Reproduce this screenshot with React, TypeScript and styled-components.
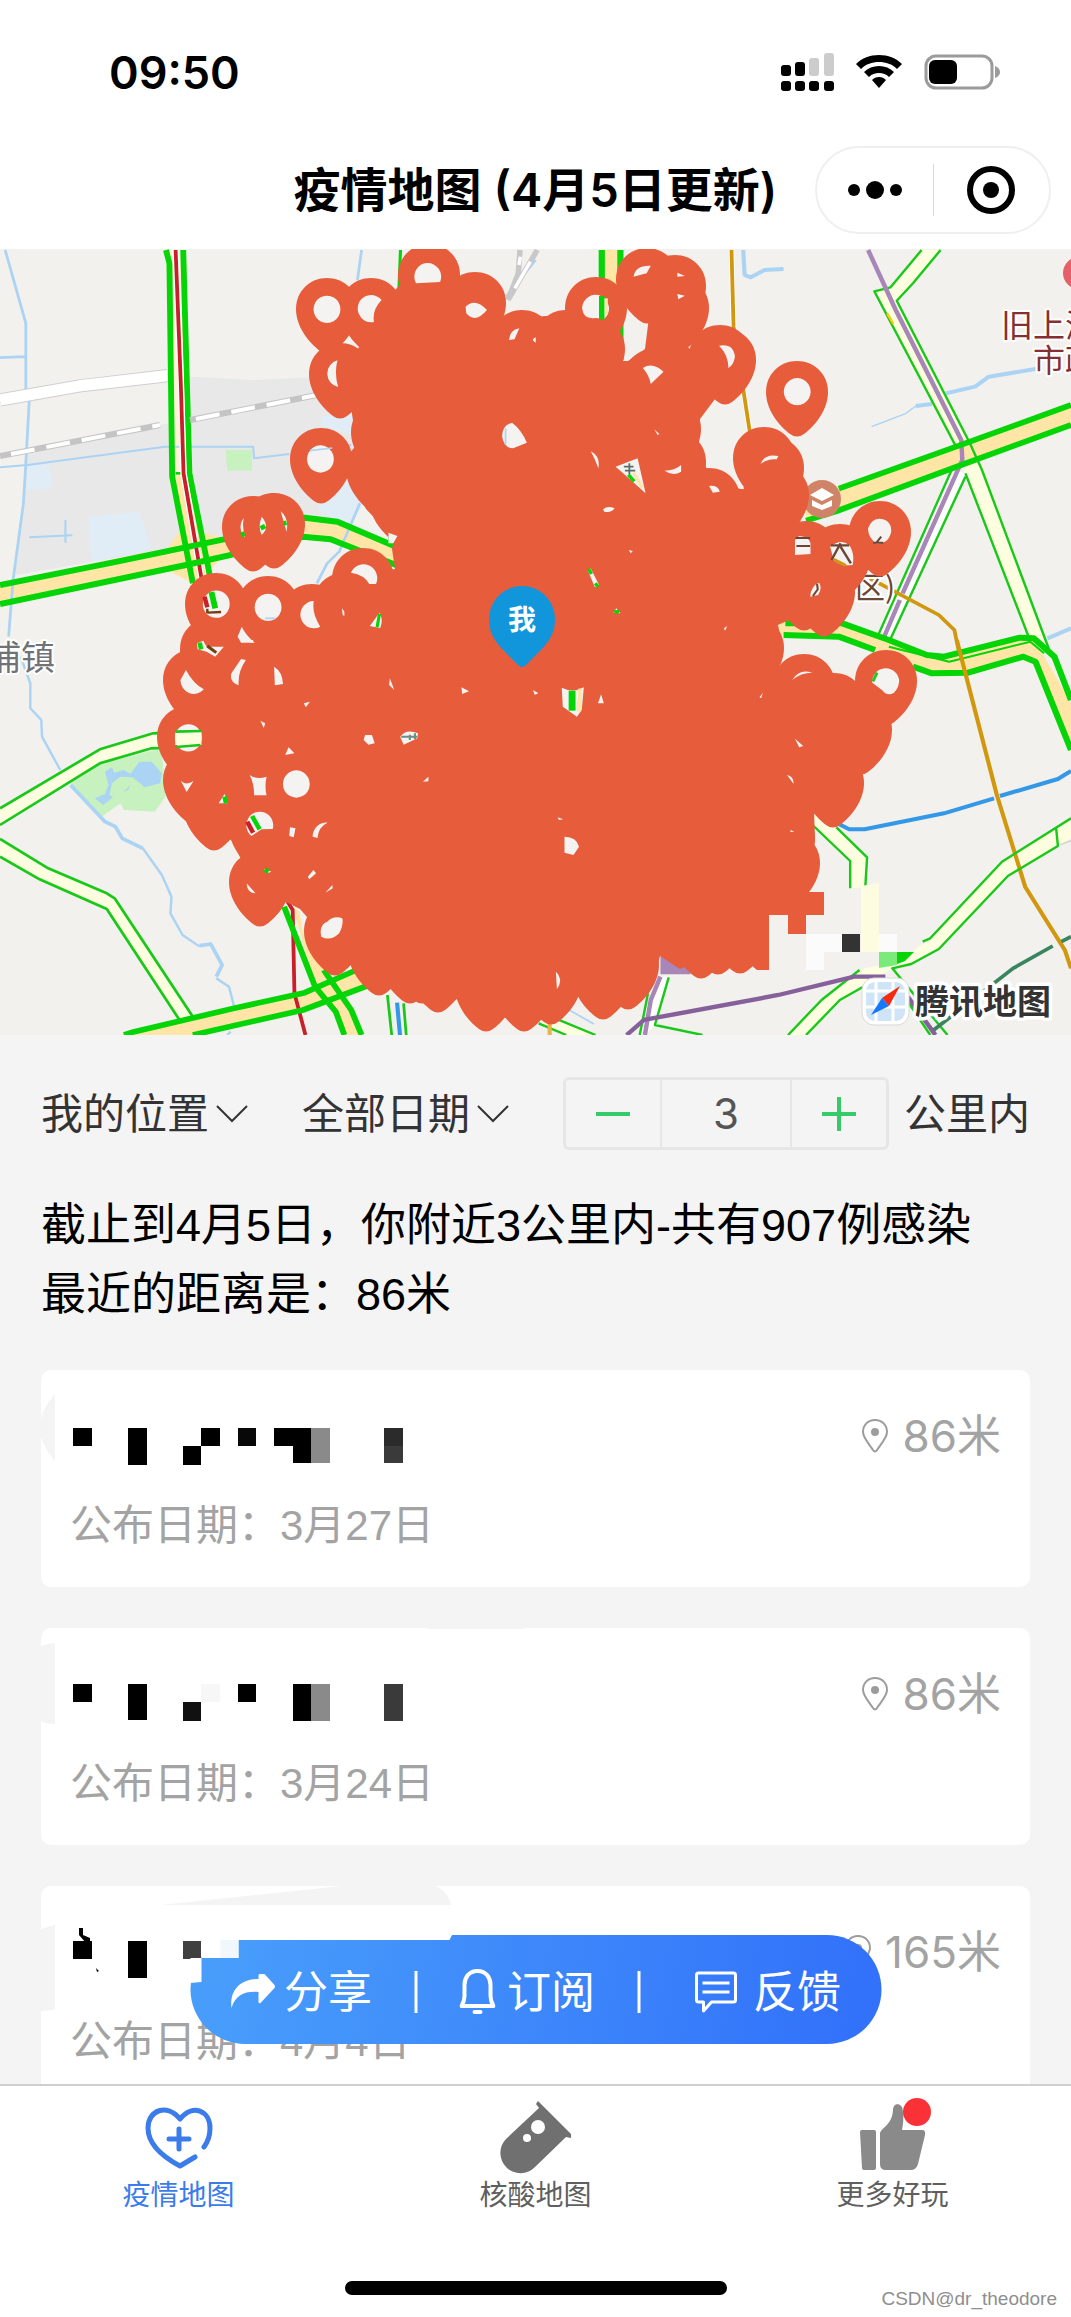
import React, { useState } from "react";
import styled, { createGlobalStyle } from "styled-components";

const sans = `Inter, "Noto Sans CJK SC", sans-serif`;
const copy = `"Liberation Sans", "Noto Sans CJK SC", sans-serif`;

const GlobalStyle = createGlobalStyle`
  * { box-sizing: border-box; }
  body { margin: 0; background: #fff; font-family: ${sans}; color: #000; }
  button, input, select { font: inherit; color: inherit; background: none; border: 0; padding: 0; margin: 0; }
  button { cursor: pointer; }
`;

/* ---------- shell ---------- */

const Shell = styled.div`
  display: flex;
  flex-direction: column;
  height: 100vh;
  overflow: hidden;
  background: #f4f4f4;
`;

const StatusBar = styled.header`
  display: flex;
  align-items: center;
  justify-content: space-between;
  height: 144px;
  padding: 0 71px 0 109px;
  background: #fff;
  font-size: 45px;
  font-weight: 600;
`;

const StatusIcons = styled.div`
  display: flex;
  align-items: center;
  gap: 22px;
`;

const NavBar = styled.div`
  display: grid;
  grid-template-columns: 1fr auto 1fr;
  align-items: center;
  height: 105px;
  padding: 0 20px 13px;
  background: #fff;
`;

const Title = styled.h1`
  grid-column: 2;
  margin: 0;
  font-size: 47px;
  line-height: 60px;
  font-weight: 600;
`;

const Capsule = styled.div`
  justify-self: end;
  display: flex;
  align-items: center;
  width: 236px;
  height: 88px;
  border: 2px solid #efefef;
  border-radius: 44px;
`;

const CapsuleButton = styled.button`
  flex: 1;
  display: flex;
  justify-content: center;
  align-items: center;
  height: 52px;
  & + & {
    border-left: 1px solid #d8d8d8;
  }
`;

const MapView = styled.section`
  flex: none;
  height: 786px;
  background: #f2f1ed;
  svg {
    display: block;
    width: 100%;
    height: 100%;
  }
`;

const Main = styled.main`
  position: relative;
  flex: 1;
  min-height: 0;
  overflow: hidden;
  padding: 42px 41px 0;
`;

/* ---------- filters ---------- */

const Filters = styled.form`
  display: flex;
  align-items: center;
  height: 73px;
  font-size: 42px;
  line-height: 60px;
  color: #333;
`;

const Picker = styled.label`
  display: flex;
  align-items: center;
  gap: 7px;
  margin-right: 54px;
`;

const Select = styled.select`
  appearance: none;
  width: 168px;
  line-height: 60px;
  outline: none;
`;

const Radius = styled.div`
  display: flex;
  align-items: center;
  gap: 15px;
  margin-left: auto;
`;

const Stepper = styled.div`
  display: flex;
  height: 73px;
  border: 3px solid #e6e6e6;
  border-radius: 6px;
`;

const StepButton = styled.button`
  display: flex;
  align-items: center;
  justify-content: center;
  width: 94px;
`;

const StepInput = styled.input`
  width: 132px;
  border: solid #e6e6e6;
  border-width: 0 2px;
  text-align: center;
  color: #555;
  outline: none;
`;

const Summary = styled.p`
  margin: 41px 0;
  font-family: ${copy};
  font-size: 45px;
  line-height: 69px;
`;

/* ---------- case cards ---------- */

const CaseList = styled.ul`
  display: flex;
  flex-direction: column;
  gap: 41px;
  margin: 0;
  padding: 0;
  list-style: none;
`;

const Card = styled.li`
  position: relative;
  display: flex;
  flex-direction: column;
  gap: 30px;
  padding: 36px 29px 31px;
  border-radius: 10px;
  background: #fff;
  color: #a3a3a3;
  line-height: 60px;
`;

const Mosaic = styled.svg`
  position: absolute;
  left: 0;
  top: 0;
  overflow: visible;
`;

const Distance = styled.div`
  display: flex;
  align-items: center;
  justify-content: flex-end;
  gap: 14px;
  font-size: 44px;
`;

const Published = styled.div`
  font-family: ${copy};
  font-size: 42px;
`;

/* ---------- floating actions ---------- */

const Actions = styled.div`
  position: absolute;
  left: 50%;
  bottom: 40px;
  transform: translateX(-50%);
  display: flex;
  align-items: center;
  width: 691px;
  height: 109px;
  padding: 4px 40px 0;
  border-radius: 55px;
  background: linear-gradient(100deg, #489dfb 5%, #3272fa 95%);
  color: #fff;
`;

const ActionPatch = styled.svg`
  position: absolute;
  left: 0;
  top: 0;
  overflow: visible;
`;

const Action = styled.button<{ $gap: number }>`
  display: flex;
  align-items: center;
  gap: ${(p) => p.$gap}px;
  font-size: 44px;
  line-height: 60px;
  &:last-child {
    margin-left: auto;
  }
`;

const Rule = styled.span`
  width: 3px;
  height: 42px;
  margin: 0 42px;
  background: #fff;
`;

/* ---------- tab bar ---------- */

const Footer = styled.footer`
  position: relative;
  flex: none;
  height: 233px;
  border-top: 2px solid #cfcfcf;
  background: #fff;
`;

const Tabs = styled.nav`
  display: grid;
  grid-template-columns: repeat(3, 1fr);
  padding-top: 15px;
`;

const Tab = styled.a<{ $active?: boolean }>`
  display: flex;
  flex-direction: column;
  align-items: center;
  gap: 4px;
  font-size: 28px;
  line-height: 40px;
  text-decoration: none;
  color: ${(p) => (p.$active ? "#3b7bea" : "#5f5f5f")};
  svg {
    overflow: visible;
  }
`;

const HomeIndicator = styled.div`
  position: absolute;
  left: 50%;
  bottom: 22px;
  width: 382px;
  height: 14px;
  margin-left: -191px;
  border-radius: 7px;
  background: #000;
`;

const Watermark = styled.span`
  position: absolute;
  right: 14px;
  bottom: 6px;
  font-family: ${copy};
  font-size: 19px;
  line-height: 24px;
  color: #8e8e8e;
`;

/* ---------- map drawing ---------- */

const GREEN = "#05d506";
const THIN = "#19c819";
const CREAM = "#ffe6a6";
const PALE = "#fdfde0";
const WATER = "#abd3f3";
const PIN = "#e75c3b";
const LAND = "#f2f1ed";

type Line = [d: string, color: string, width: number];
type Area = [d: string, color: string];
type Tile = { at: string; areas: Area[]; lines: Line[] };

const WEST = "0.34437 0.33333";
const EAST = "0.34503 0.33333";

const tiles: Tile[] = [
  {
    at: `translate(0 1) scale(${WEST})`,
    areas: [
      ["M80 600 490 520 500 385 555 380 740 390 1050 375V760L985 820 880 800 700 860 45 975 75 660Z", "#e8e8e8"],
      ["M80 640 145 645 152 715 75 720ZM258 800 405 785 438 890 430 900 265 935ZM930 500 1060 480 1060 560 935 530ZM930 740 1010 690 1050 770 1010 830 925 780Z", "#e0edf7"],
      ["M655 600H732V662H660Z", "#c8f1c0"],
      ["M490 890 530 830 640 862 630 940 560 1000 495 965Z", CREAM],
      ["M482 0 500 680 560 1000 575 1090H630L550 670 530 0Z", "#fff3d6"],
      ["M500 680 560 1000 600 1000 550 675Z", CREAM],
      ["M0 1005 340 925 650 865 885 800 980 815 1145 888 1150 950 960 868 880 860 670 915 0 1062Z", CREAM],
    ],
    lines: [
      ["M15 0 75 220V420M85 450 75 640 68 760 38 990 25 1160M0 323 72 320M1050 0 1038 90M1555 30 1470 140M1045 760 985 905 950 940 920 1000", WATER, 8],
      ["M0 652 80 645 320 612 480 590H735L738 625 840 612M880 603 1020 585M85 862 210 856M190 810V878", WATER, 6],
      ["M0 450 230 408 487 377", "#cfcfcf", 40],
      ["M0 450 230 408 487 377", "#ffffff", 34],
      ["M1510 0 1505 70 1475 150M1560 0 1475 150", "#c8c8c8", 16],
      ["M1511 20 1507 45M1540 35 1495 115", "#ffffff", 10],
      ["M482 0 492 40 500 680 560 1000", GREEN, 17],
      ["M532 0 550 670 610 980 625 1075", GREEN, 17],
      ["M510 670H550", GREEN, 8],
      ["M510 0 525 400 533 670 600 1075", "#ffffff", 19],
      ["M510 0 525 400 533 670 600 1075", "#c8202a", 11],
      ["M0 1005 340 935 650 868 885 803 980 815 1145 888M0 1062 540 945 700 908 880 860 960 868 1150 945", GREEN, 18],
      ["M1163 0 1158 130M1132 845V890", GREEN, 9],
    ],
  },
  {
    at: `translate(530 1) scale(${EAST})`,
    areas: [
      ["M208 0H262V330H208Z", CREAM],
      ["M1135 0 1045 112 998 124 1235 590 1260 670 1445 1160 1500 1190 1310 640 1063 152 1110 100 1190 0Z", PALE],
      ["M1222 660 1000 1165 1045 1165 1262 670Z", "#ffffff"],
      ["M895 716 1235 590 1568 465V525L1250 645 890 783 800 810V750Z", CREAM],
    ],
    lines: [
      ["M208 0V330M262 0V330", GREEN, 18],
      ["M584 0 590 230 637 545", "#ffffff", 16],
      ["M584 0 590 230 637 545", "#d1970f", 11],
      ["M618 0 622 75 640 82 680 60 735 57M1118 468 1165 462M1205 430 1290 410 1330 380 1465 357M1500 1165 1568 1135", WATER, 12],
      ["M990 530 1090 490 1118 468", WATER, 4],
      ["M1135 0 1045 112 998 124 1235 590M1190 0 1110 100 1063 152 1275 580M1262 670 1445 1160M1275 580 1310 660 1505 1200M1222 660 990 1200M1262 680 1030 1200", THIN, 7],
      ["M1035 190 1053 222", "#ffc60a", 7],
      ["M980 0 1060 180 1250 570 1253 630 1080 1030M1072 1050 1010 1200", "#a887b8", 13],
      ["M895 716 1235 590 1568 465M800 812 890 783 1250 645 1568 525", GREEN, 17],
      ["M985 985 1185 1095 1230 1140 1242 1200", "#d1970f", 11],
    ],
  },
  {
    at: `translate(0 391) scale(${WEST})`,
    areas: [
      ["M205 430 290 372 470 325 480 470 450 515 360 510 350 490 295 530Z", "#c8f1c0"],
      ["M0 505 290 328 445 280 590 272V318L440 325 290 370 0 555ZM0 597 140 685 310 760 333 775 560 1130 520 1138 310 807 115 718 0 650Z", PALE],
      ["M305 395 325 382 332 398 360 390 378 402 405 365 440 365 470 400 465 430 420 442 385 412 350 410 325 430 318 465 328 472 300 495 275 475 305 462 315 435ZM358 455 380 435 372 450Z", WATER],
      ["M360 1185 885 1058 1035 990 1065 1038 880 1110 560 1185Z", CREAM],
      ["M850 800 870 815 880 880 1020 1110 1050 1185H1000L975 1115 915 1040Z", CREAM],
    ],
    lines: [
      ["M60 50 88 130V205L120 240 122 290 175 390M415 625 470 705 498 770 495 820 530 885 580 920M628 1015 665 1040 680 1100M670 1175 660 1185", WATER, 7],
      ["M205 435 305 545 335 560 355 595 415 625M580 917 612 912 645 975 628 1010", WATER, 11],
      ["M0 505 290 328 445 280 590 272M0 555 290 370 440 325 590 318M0 597 140 685 310 760 333 775 560 1130M0 650 115 718 310 807 520 1138", THIN, 8],
      ["M835 785 850 810 855 1060 887 1185", "#c8202a", 11],
      ["M360 1185 390 1175 680 1105 885 1058 1035 990M560 1185 880 1110 1065 1038M825 800 915 1040 975 1115 1000 1185M940 990 1020 1110 1050 1185", GREEN, 17],
      ["M1125 1065 1138 1190M1172 1090 1180 1190", THIN, 8],
      ["M1153 1088 1162 1190", "#3498e8", 12],
    ],
  },
  {
    at: `translate(530 391) scale(${EAST})`,
    areas: [
      ["M735-60 905-50 1040 0 1150 45 1200 50 1420-7 1460-5 1568 190V330L1465 65 1430 50 1270 98 1165 100 1000 30 895-10 700-15Z", CREAM],
      ["M815 510 888 562 977 652 972 745H928V663L822 558Z", PALE],
      ["M1568 535 1368 665 1160 895 1100 940 955 990 845 1080 748 1185H800L898 1080 1050 985 1105 972 1185 927 1385 708 1568 595Z", PALE],
      ["M378 940 465 985V1003H378Z", "#a887b8"],
      ["M360 1010H405L362 1155 335 1185H320Z", "#ffffff"],
      ["M25 1150 80 1138 190 1185H105Z", PALE],
    ],
    lines: [
      ["M735-15 895-10 1000 30M1110 80 1165 100 1270 98 1430 50 1465 65 1568 330M740-50 905-50 1040 0 1150 45 1200 50 1420-7 1460-5 1520 50 1568 180", GREEN, 18],
      ["M1040 20 1215 65 1450 5 1490 40", GREEN, 6],
      ["M1237 0 1353 465 1435 740 1550 930 1568 985", "#d1970f", 12],
      ["M815 510 925 568H970L1200 520 1345 475M1362 468 1530 417 1568 393", "#3498e8", 12],
      ["M822 558 928 663V745M888 562 977 652 972 738M1568 535 1368 665 1160 895 1138 905M1525 565 1530 618 1385 708 1185 927 1105 972 1050 985 1210 1185M955 990 845 1080 748 1185M975 1035 898 1080 800 1185M1085 1070 1160 1185M402 1012 362 1155 500 1185M342 1060 318 1185M25 1150 105 1185M80 1138 190 1185", THIN, 7],
      ["M1535 615 1568 602", "#cfcfcf", 4],
      ["M378 1010 350 1080 333 1185", "#a887b8", 13],
      ["M280 1185 330 1140 720 1065 940 1010 1030 1010M1095 1070 1175 1185", "#86609a", 13],
      ["M1170 1170 1400 985 1515 918M1540 905 1568 890", "#3a8560", 11],
      ["M105 1105 185 1152", WATER, 5],
      ["M57 1150V1190", "#e8b54a", 12],
    ],
  },
];

/* slivers of map that stay visible between the overlapping pins */
const gaps = [
  {
    at: tiles[0].at,
    d: "M950 137A39 41 0 1 1 949 137ZM1108 150A39 41 0 1 0 1086 216Q1080 180 1108 150ZM1208 100A39 41 0 1 1 1278 96ZM1352 170Q1380 142 1414 180 1380 222 1354 190ZM1478 270Q1480 240 1508 235L1494 268ZM1547 270 1555 262V278ZM980 331A39 41 0 0 0 982 411Q970 370 980 331ZM1002 278 1014 260 1028 280ZM931 586A39 41 0 1 1 930 586ZM1487 518Q1458 525 1458 560 1465 595 1490 595L1530 578Q1515 540 1487 518ZM708 804A39 41 0 0 0 712 862Q702 830 708 804ZM760 800Q785 830 760 855 748 830 760 800ZM815 784Q840 805 832 845 824 815 815 784ZM1019 968A39 41 0 0 1 1092 1002L1072 1002Q1060 975 1019 968ZM667 1063A39 41 0 1 1 589 1062 39 41 0 1 1 667 1063ZM779 1031A39 41 0 1 1 778 1031ZM911 1053A39 41 0 1 0 930 1130Q905 1090 911 1053ZM993 1075 1000 1085V1098L995 1095ZM1074 1128 1102 1088Q1114 1110 1104 1134ZM702 1130Q715 1158 740 1178H700L690 1160ZM1128 848 1154 858 1142 880H1128Z",
  },
  {
    at: tiles[1].at,
    d: "M151 175A39 41 0 1 1 215 207L190 204Q155 210 151 175ZM300 80Q305 45 350 47L338 70ZM427 68 449 78 427 80ZM427 132 449 137 430 148ZM548 287Q590 280 594 320 590 345 575 354 575 315 548 287ZM775 384A39 41 0 1 1 774 384ZM327 354Q355 335 387 365L350 402Q345 375 327 354ZM8 268 16 262V278ZM176 604Q205 620 198 655 188 625 176 604ZM248 650 312 625 335 730 270 670ZM390 662Q420 662 438 645V665Q415 680 390 662ZM668 642Q680 610 720 618L715 628Q690 625 668 642ZM519 708Q545 705 550 725L530 728ZM212 778Q225 765 245 775 235 790 215 785ZM605 715 618 708 620 718ZM360 538 375 552 370 555ZM768 870 780 858Q810 860 813 880V912L768 915ZM870 890Q900 865 925 885 942 910 935 945 900 950 880 930ZM1012 806Q1048 808 1047 845 1040 880 1005 882 978 860 980 835 988 808 1012 806ZM838 998Q848 1015 835 1035L812 1040Q815 1005 838 998ZM168 962 176 955 200 1005 188 1012ZM242 1088 250 1075 262 1090ZM286 900 298 903 292 910ZM562 1135 572 1128 565 1142Z",
  },
  {
    at: tiles[2].at,
    d: "M540 90Q560 130 592 148A39 41 0 0 1 524 120ZM700 57 714 60Q690 95 693 136 665 125 672 100ZM796 80Q820 95 822 132L798 136ZM586 294A39 41 0 1 1 508 293 39 41 0 1 1 586 294ZM525 422Q540 438 562 423L542 456ZM725 405Q745 420 774 410 768 440 774 466L738 466Q738 430 725 405ZM861 391A39 41 0 1 1 860 391ZM792 567A39 41 0 1 0 730 588L760 568ZM842 562 858 565 853 592 840 588ZM951 548A39 41 0 0 0 908 590L922 594Q925 560 951 548ZM994 835A38 38 0 0 0 950 845Q925 855 933 890 960 905 985 880 998 855 994 835ZM716 730 742 760Q718 760 716 730ZM894 710 910 690 918 700 898 718ZM945 758 965 735 966 745ZM882 190 900 185 888 202ZM756 242 770 250 766 264ZM828 345 838 322 855 340ZM635 490 652 462 662 490ZM1132 115 1145 150 1130 135ZM1340 142 1362 154 1342 162ZM1060 285 1080 285 1088 310 1070 314 1056 300ZM1162 290Q1180 265 1214 280L1212 295 1172 314ZM1278 288 1286 306ZM1228 425 1244 410 1244 424ZM1548 150 1562 160 1552 162ZM572 10 590 2 600 20 650 20 625 50 600 35 574 28ZM765 686 788 695 778 699ZM700 0H735V8Z",
  },
  {
    at: tiles[3].at,
    d: "M1070 124A39 41 0 1 0 992 128L1020 150Q1035 170 1055 158 1068 145 1070 124ZM92 143Q125 160 156 142L150 210 136 230 95 200ZM197 190 206 163 214 190ZM100 590Q135 590 142 620L126 645 100 638ZM80 532 96 538 84 540ZM760 120Q780 85 818 98 785 98 760 120ZM768 296 792 318 780 322ZM745 405Q765 410 764 432ZM75 995Q98 1020 78 1048ZM665 172 675 158 670 175ZM985 230 990 245ZM10 152 24 160 14 164ZM755 570 766 575 755 576ZM28 68 42 78Z",
  },
];

const gapDetails: { at: string; lines: Line[] }[] = [
  {
    at: tiles[0].at,
    lines: [
      ["M700 855 710 850M757 835 770 828M824 820 832 818", GREEN, 14],
      ["M614 1026 625 1075", GREEN, 17],
      ["M594 1040 602 1072", "#c8202a", 13],
      ["M602 1088 642 1086M602 1076V1090", "#744012", 7],
      ["M1102 1092 1095 1132", GREEN, 9],
      ["M900 602 965 594M1468 535V585M770 1105H800", WATER, 5],
    ],
  },
  {
    at: tiles[1].at,
    lines: [
      ["M208 138V208", GREEN, 16],
      ["M221 145V195", CREAM, 9],
      ["M300 668 325 712", CREAM, 9],
      ["M285 674 302 694M171 958 178 972M189 1000 197 1010M244 1085 258 1085", GREEN, 10],
      ["M272 650H300M288 640V672M275 662H305", "#5b6b6b", 5],
      ["M770 864H812M772 888H812", "#6b4636", 6],
      ["M872 886H925M900 880 874 930M900 890 930 940", "#6b4636", 7],
      ["M995 878H1024M1018 860 1004 878", "#6b4636", 6],
      ["M880 928 915 946", "#d1970f", 9],
      ["M832 1002 834 1018 820 1038", "#6b4636", 6],
    ],
  },
  {
    at: tiles[2].at,
    lines: [
      ["M509 295H585", PALE, 40],
      ["M509 275 585 273M512 321 582 315", THIN, 8],
      ["M580 8 584 28M652 470 656 490M732 528 754 568M768 690 780 694", GREEN, 13],
      ["M602 18 628 38", "#744012", 9],
      ["M718 545 735 578", "#c8202a", 13],
      ["M1165 290H1212M1190 284V300M1205 280V298", "#6a8f84", 6],
    ],
  },
  {
    at: tiles[3].at,
    lines: [
      ["M994 124 1006 98", THIN, 8],
      ["M122 152V212", GREEN, 20],
      ["M146 146 141 214", CREAM, 12],
    ],
  },
];

const pins: [number, number][] = [
  [327, 60], [371, 60], [429, 26], [475, 54], [522, 92], [340, 125], [382, 183], [377, 220], [321, 210],
  [253, 278], [274, 275], [363, 330], [216, 355], [268, 358], [312, 366], [344, 355], [211, 400], [194, 431],
  [188, 488], [194, 531], [214, 557], [260, 578], [260, 633], [335, 682], [379, 702], [410, 710], [422, 710],
  [438, 719], [486, 738], [524, 738], [551, 731], [603, 726], [628, 716], [701, 685], [718, 681], [596, 59],
  [647, 30], [675, 37], [678, 59], [720, 107], [725, 111], [797, 143], [764, 209], [773, 219], [778, 246],
  [709, 250], [675, 213], [880, 283], [840, 306], [806, 303], [824, 343], [804, 337], [753, 399], [546, 98],
  [566, 92], [594, 100], [654, 131], [804, 436], [834, 455], [861, 481], [886, 432], [833, 534], [789, 614],
  [784, 590], [420, 60], [400, 250], [670, 180], [740, 680], [452, 90],
];

const CLUSTER =
  "M429 30 475 56 522 95 546 98 594 80 612 92 614 112 628 112 645 100 650 60 690 100 735 120 715 150 700 170 698 190 705 215 712 235 742 240 764 209 780 245 805 300 840 310 850 340 815 370 789 371 778 376 783 400 776 422 804 436 834 455 861 481 850 510 833 534 814 561 815 590 805 643H824V666H806V685H788V666H769V721H757L745 711 718 705 700 710 680 720 660 707 655 726 640 740 628 740 603 745H575L551 750 524 750 505 769 486 750 458 751 438 740 410 740 379 730 352 715 335 700 300 660 286 653 260 650 240 608 232 592 214 575 192 560 190 500 200 440 211 400 240 365 312 366 345 345 363 325 395 320 392 300 395 286 388 283 366 260 352 232 355 185 352 165 345 130 371 70 390 50Z";

function CityMap() {
  return (
    <svg viewBox="0 0 1071 786" preserveAspectRatio="xMidYMid slice" role="img" aria-label="疫情分布地图">
      <defs>
        <path id="pin" d="M0-31C17-31 31-18 31 0 31 17 19 33 7 42Q0 47-7 42C-19 33-31 17-31 0-31-18-17-31 0-31Z" />
      </defs>
      <rect width="1071" height="786" fill={LAND} />
      {tiles.map((t) => (
        <g key={t.at} transform={t.at}>
          {t.areas.map(([d, c]) => (
            <path key={d} d={d} fill={c} />
          ))}
          {t.lines.map(([d, c, w]) => (
            <path key={d + c} d={d} fill="none" stroke={c} strokeWidth={w} strokeLinejoin="round" />
          ))}
        </g>
      ))}
      <path d="M0 207 160 176M190 171 317 146" stroke="#c4c4c4" strokeWidth="6" />
      <path d="M11 205 160 176M196 170 317 146" stroke="#fff" strokeWidth="4" strokeDasharray="24 12" />
      <g fontFamily={`"Noto Sans CJK SC", sans-serif`} paintOrder="stroke" stroke="#fff" strokeWidth="4" strokeLinejoin="round">
        <text x="-13" y="421" fontSize="34" fill="#707278">浦镇</text>
        <text x="1001" y="88" fontSize="32" fill="#862f33">旧上海</text>
        <text x="1033" y="123" fontSize="32" fill="#862f33">市政府</text>
        <text x="855" y="349" fontSize="30" fill="#6b4636">区)</text>
      </g>
      <circle cx="1079" cy="24" r="16" fill="#e4606a" />
      <circle cx="822" cy="250" r="19" fill="#cf8468" />
      <path d="M810 246 822 239 834 246 822 252ZM812 251 822 256 832 251V257L822 261 812 257Z" fill="#fff" />
      <g fill={PIN}>
        {pins.map(([x, y]) => (
          <use key={`${x}-${y}`} href="#pin" x={x} y={y} />
        ))}
      </g>
      <path d="M769 666H824V643L900 634Q926 650 926 678L912 706Q880 724 769 724Z" fill={LAND} />
      <path d={CLUSTER} fill={PIN} />
      {gaps.map((g) => (
        <path key={g.at} transform={g.at} d={g.d} fill="#f4f3f1" />
      ))}
      {gapDetails.map((g) => (
        <g key={g.at} transform={g.at}>
          {g.lines.map(([d, c, w]) => (
            <path key={d} d={d} fill="none" stroke={c} strokeWidth={w} />
          ))}
        </g>
      ))}
      <path d="M806 685H842V703H824V721H806ZM879 685H897V703H879Z" fill="#fbfbfb" />
      <path d="M842 685H860V703H842Z" fill="#333" />
      <path d="M861 637 879 634V703H861Z" fill="#fdfbe0" />
      <path d="M879 703H897V716L879 719Z" fill="#7bea7b" />
      <path d="M897 703H914L905 712 897 715Z" fill={GREEN} />
      <path d="M522 337C541 337 555 352 555 371 555 387 546 396 534 408L526 416Q522 420 518 416L510 408C498 396 489 387 489 371 489 352 503 337 522 337Z" fill="#1296db" />
      <text x="522" y="381" textAnchor="middle" fontFamily={`"Noto Sans CJK SC", sans-serif`} fontSize="28" fontWeight="700" fill="#fff">我</text>
      <rect x="862" y="729" width="47" height="47" rx="12" fill="#fff" stroke="#d9d9d9" />
      <rect x="866" y="733" width="39" height="39" rx="9" fill="#cfe4f7" />
      <path d="M876 733V772M893 733V772M866 742H905M866 758H905" stroke="#fff" strokeWidth="3" />
      <path d="M900 737 882 749 889 757Z" fill="#f52a10" />
      <path d="M871 766 882 749 889 757Z" fill="#1677ff" />
      <text x="915" y="765" fontFamily={`"Noto Sans CJK SC", sans-serif`} fontSize="34" fontWeight="700" fill="#333" stroke="#fff" strokeWidth="7" strokeLinejoin="round" paintOrder="stroke">腾讯地图</text>
    </svg>
  );
}

/* ---------- icons ---------- */

const SignalIcon = () => (
  <svg width="53" height="40" viewBox="0 0 53 40">
    <g fill="#000">
      <rect x="0" y="13" width="10" height="11" rx="3" />
      <rect x="14" y="10" width="10" height="14" rx="3" />
      <rect x="0" y="29" width="10" height="10" rx="3" />
      <rect x="14" y="29" width="10" height="10" rx="3" />
      <rect x="28" y="29" width="10" height="10" rx="3" />
      <rect x="43" y="29" width="10" height="10" rx="3" />
    </g>
    <rect x="28" y="6" width="10" height="18" rx="3" fill="#ccc" />
    <rect x="43" y="1" width="10" height="23" rx="3" fill="#ccc" />
  </svg>
);

const WifiIcon = () => (
  <svg width="46" height="34" viewBox="0 0 46 34">
    <path d="M23 0C32 0 40 3 46 9L41 14C36 9 30 7 23 7S10 9 5 14L0 9C6 3 14 0 23 0ZM23 11C29 11 34 13 38 17L33 22C30 19 27 18 23 18S16 19 13 22L8 17C12 13 17 11 23 11ZM23 22C26 22 28 23 30 25L23 33 16 25C18 23 20 22 23 22Z" />
  </svg>
);

const BatteryIcon = () => (
  <svg width="76" height="36" viewBox="0 0 76 36">
    <rect x="2" y="2" width="66" height="32" rx="10" fill="none" stroke="#9b9b9b" strokeWidth="3" />
    <rect x="5" y="6" width="28" height="24" rx="6" />
    <path d="M71 12Q76 14 76 18T71 24Z" fill="#9b9b9b" />
  </svg>
);

const DotsIcon = () => (
  <svg width="54" height="18" viewBox="0 0 54 18">
    <circle cx="6" cy="9" r="6" />
    <circle cx="27" cy="9" r="9" />
    <circle cx="48" cy="9" r="6" />
  </svg>
);

const TargetIcon = () => (
  <svg width="48" height="48" viewBox="0 0 48 48">
    <circle cx="24" cy="24" r="21" fill="none" stroke="#000" strokeWidth="6" />
    <circle cx="24" cy="24" r="8" />
  </svg>
);

const ChevronIcon = () => (
  <svg width="32" height="18" viewBox="0 0 32 18" fill="none" stroke="#333" strokeWidth="2">
    <path d="M1 1 16 16 31 1" />
  </svg>
);

const StepIcon = ({ plus }: { plus?: boolean }) => (
  <svg width="34" height="34" viewBox="0 0 34 34" stroke="#35cb68" strokeWidth="4">
    <path d={plus ? "M0 17H34M17 0V34" : "M0 17H34"} />
  </svg>
);

const PlaceIcon = () => (
  <svg width="26" height="34" viewBox="0 0 26 34">
    <path d="M13 1C20 1 25 6 25 13 25 19 18 26 15 31Q13 34 11 31C8 26 1 19 1 13 1 6 6 1 13 1Z" fill="none" stroke="#9c9c9c" strokeWidth="2" />
    <circle cx="13" cy="13" r="4" fill="#9c9c9c" />
  </svg>
);

const ShareIcon = () => (
  <svg width="45" height="35" viewBox="0 0 45 35" fill="#fff">
    <path d="M29 0H34L44 11Q45 13 44 14L30 29Q28 30 28 28V18C14 17 5 21 1 34-1 18 8 5 28 5V2Q28 0 29 0Z" />
  </svg>
);

const BellIcon = () => (
  <svg width="36" height="46" viewBox="0 0 36 46" fill="none" stroke="#fff" strokeWidth="4" strokeLinejoin="round" strokeLinecap="round">
    <path d="M18 2C9 2 5 9 5 16V27Q5 32 2 37H34Q31 32 31 27V16C31 9 27 2 18 2ZM15 43H21" />
  </svg>
);

const CommentIcon = () => (
  <svg width="43" height="42" viewBox="0 0 43 42" fill="none" stroke="#fff" strokeWidth="3" strokeLinejoin="round">
    <path d="M4 2H39Q41 2 41 4V29Q41 31 39 31H17L9 40V31H4Q2 31 2 29V4Q2 2 4 2ZM8 12H35M8 21H35" />
  </svg>
);

const HeartIcon = () => (
  <svg width="68" height="70" viewBox="0 -7 68 70" fill="none" stroke="#3b7bea" strokeWidth="5" strokeLinecap="round" strokeLinejoin="round">
    <path d="M50 49 35 58C20 50 3 37 3 20 3 2 22-5 35 11 48-5 65 3 65 20Q65 31 59 39M34 21V41M24 31H44" />
  </svg>
);

const TubeIcon = () => (
  <svg width="70" height="70" viewBox="0 0 70 70">
    <path d="M37 0 70 33V37L65 36 34 66A20 20 0 0 1 5 38L38 7 35 3Z" fill="#707070" />
    <circle cx="37" cy="26" r="7" fill="#fff" />
    <circle cx="26" cy="37" r="4" fill="#fff" />
  </svg>
);

const ThumbIcon = () => (
  <svg width="66" height="70" viewBox="0 -3 66 70" fill="#8a8a8a">
    <path d="M2 26H14Q16 26 16 28V64Q16 66 14 66H4Q2 66 2 64L0 28Q0 26 2 26Z" />
    <path d="M20 30C20 24 32 22 33 6 33-2 43-2 43 8Q44 16 42 26H62Q66 26 65 31L58 60Q56 66 51 66H26Q20 66 20 60Z" />
    <circle cx="57" cy="8" r="14" fill="#fa3238" />
  </svg>
);

/* ---------- redacted addresses ---------- */

type Cell = [x: number, y: number, w: number, h: number, color: string];
type CaseItem = { date: string; distance: string; smear: string; cells: Cell[]; specks?: string };

const cases: CaseItem[] = [
  {
    date: "3月27日",
    distance: "86米",
    smear: "M14 24Q-16 57 14 91Z",
    cells: [
      [32, 58, 19, 18, "#000"], [87, 58, 19, 37, "#000"], [142, 76, 18, 19, "#000"], [160, 58, 19, 18, "#000"],
      [197, 58, 18, 18, "#080808"], [233, 58, 37, 18, "#000"], [252, 76, 18, 17, "#000"], [270, 58, 19, 35, "#8a8a8a"],
      [343, 58, 19, 18, "#2b2b2b"], [343, 76, 19, 17, "#3a3a3a"],
    ],
  },
  {
    date: "3月24日",
    distance: "86米",
    smear: "M14 15C-34 17-34 95 14 96ZM385 1Q435-24 484 1Z",
    cells: [
      [32, 56, 19, 18, "#000"], [87, 56, 19, 36, "#000"], [142, 74, 18, 19, "#111"], [160, 56, 19, 18, "#f7f7f7"],
      [197, 56, 18, 18, "#000"], [252, 56, 18, 37, "#000"], [270, 56, 19, 37, "#8a8a8a"], [343, 56, 19, 37, "#3a3a3a"],
    ],
  },
  {
    date: "4月4日",
    distance: "165米",
    smear: "M14 39C-50 52-50 140 14 123ZM119 19 310-1H390Q406 2 410 19Z",
    cells: [[32, 55, 19, 18, "#000"], [87, 55, 19, 37, "#000"], [142, 55, 18, 18, "#404040"]],
    specks: "M38 42H42V49L49 52V62H47L45 57 38 49ZM55 82 58 85 56 86Z",
  },
];

export default function App() {
  const [km, setKm] = useState(3);

  return (
    <>
      <GlobalStyle />
      <Shell>
        <StatusBar>
          <time>09:50</time>
          <StatusIcons>
            <SignalIcon />
            <WifiIcon />
            <BatteryIcon />
          </StatusIcons>
        </StatusBar>
        <NavBar>
          <Title>疫情地图 (4月5日更新)</Title>
          <Capsule>
            <CapsuleButton type="button" aria-label="更多"><DotsIcon /></CapsuleButton>
            <CapsuleButton type="button" aria-label="关闭"><TargetIcon /></CapsuleButton>
          </Capsule>
        </NavBar>
        <MapView>
          <CityMap />
        </MapView>
        <Main>
          <Filters onSubmit={(e) => e.preventDefault()}>
            <Picker>
              <Select aria-label="位置">
                <option>我的位置</option>
              </Select>
              <ChevronIcon />
            </Picker>
            <Picker>
              <Select aria-label="日期">
                <option>全部日期</option>
              </Select>
              <ChevronIcon />
            </Picker>
            <Radius>
              <Stepper>
                <StepButton type="button" aria-label="减少" onClick={() => setKm(Math.max(1, km - 1))}>
                  <StepIcon />
                </StepButton>
                <StepInput
                  id="km"
                  inputMode="numeric"
                  value={km}
                  onChange={(e) => setKm(Number(e.target.value) || 1)}
                />
                <StepButton type="button" aria-label="增加" onClick={() => setKm(km + 1)}>
                  <StepIcon plus />
                </StepButton>
              </Stepper>
              <label htmlFor="km">公里内</label>
            </Radius>
          </Filters>
          <Summary>
            截止到4月5日，你附近3公里内-共有907例感染
            <br />
            最近的距离是：86米
          </Summary>
          <CaseList>
            {cases.map((c) => (
              <Card key={c.date}>
                <Mosaic width="490" height="217" viewBox="0 0 490 217" aria-hidden="true">
                  <path d={c.smear} fill="#f4f4f4" />
                  {c.cells.map(([x, y, w, h, color]) => (
                    <rect key={`${x}-${y}`} x={x} y={y} width={w} height={h} fill={color} />
                  ))}
                  {c.specks && <path d={c.specks} />}
                </Mosaic>
                <Distance>
                  <PlaceIcon />
                  {c.distance}
                </Distance>
                <Published>公布日期：{c.date}</Published>
              </Card>
            ))}
          </CaseList>
          <Actions>
            <ActionPatch width="270" height="109" viewBox="0 0 270 109" aria-hidden="true">
              <path d="M11-1H262L259 5H48V23H11V47L0 48V23H11Z" fill="#fff" />
              <rect x="30" y="5" width="18" height="18" fill="#f0f8fe" />
            </ActionPatch>
            <Action type="button" $gap={9}><ShareIcon />分享</Action>
            <Rule />
            <Action type="button" $gap={12}><BellIcon />订阅</Action>
            <Rule />
            <Action type="button" $gap={16}><CommentIcon />反馈</Action>
          </Actions>
        </Main>
        <Footer>
          <Tabs>
            <Tab href="#map" $active><HeartIcon />疫情地图</Tab>
            <Tab href="#test"><TubeIcon />核酸地图</Tab>
            <Tab href="#more"><ThumbIcon />更多好玩</Tab>
          </Tabs>
          <HomeIndicator />
          <Watermark>CSDN@dr_theodore</Watermark>
        </Footer>
      </Shell>
    </>
  );
}
